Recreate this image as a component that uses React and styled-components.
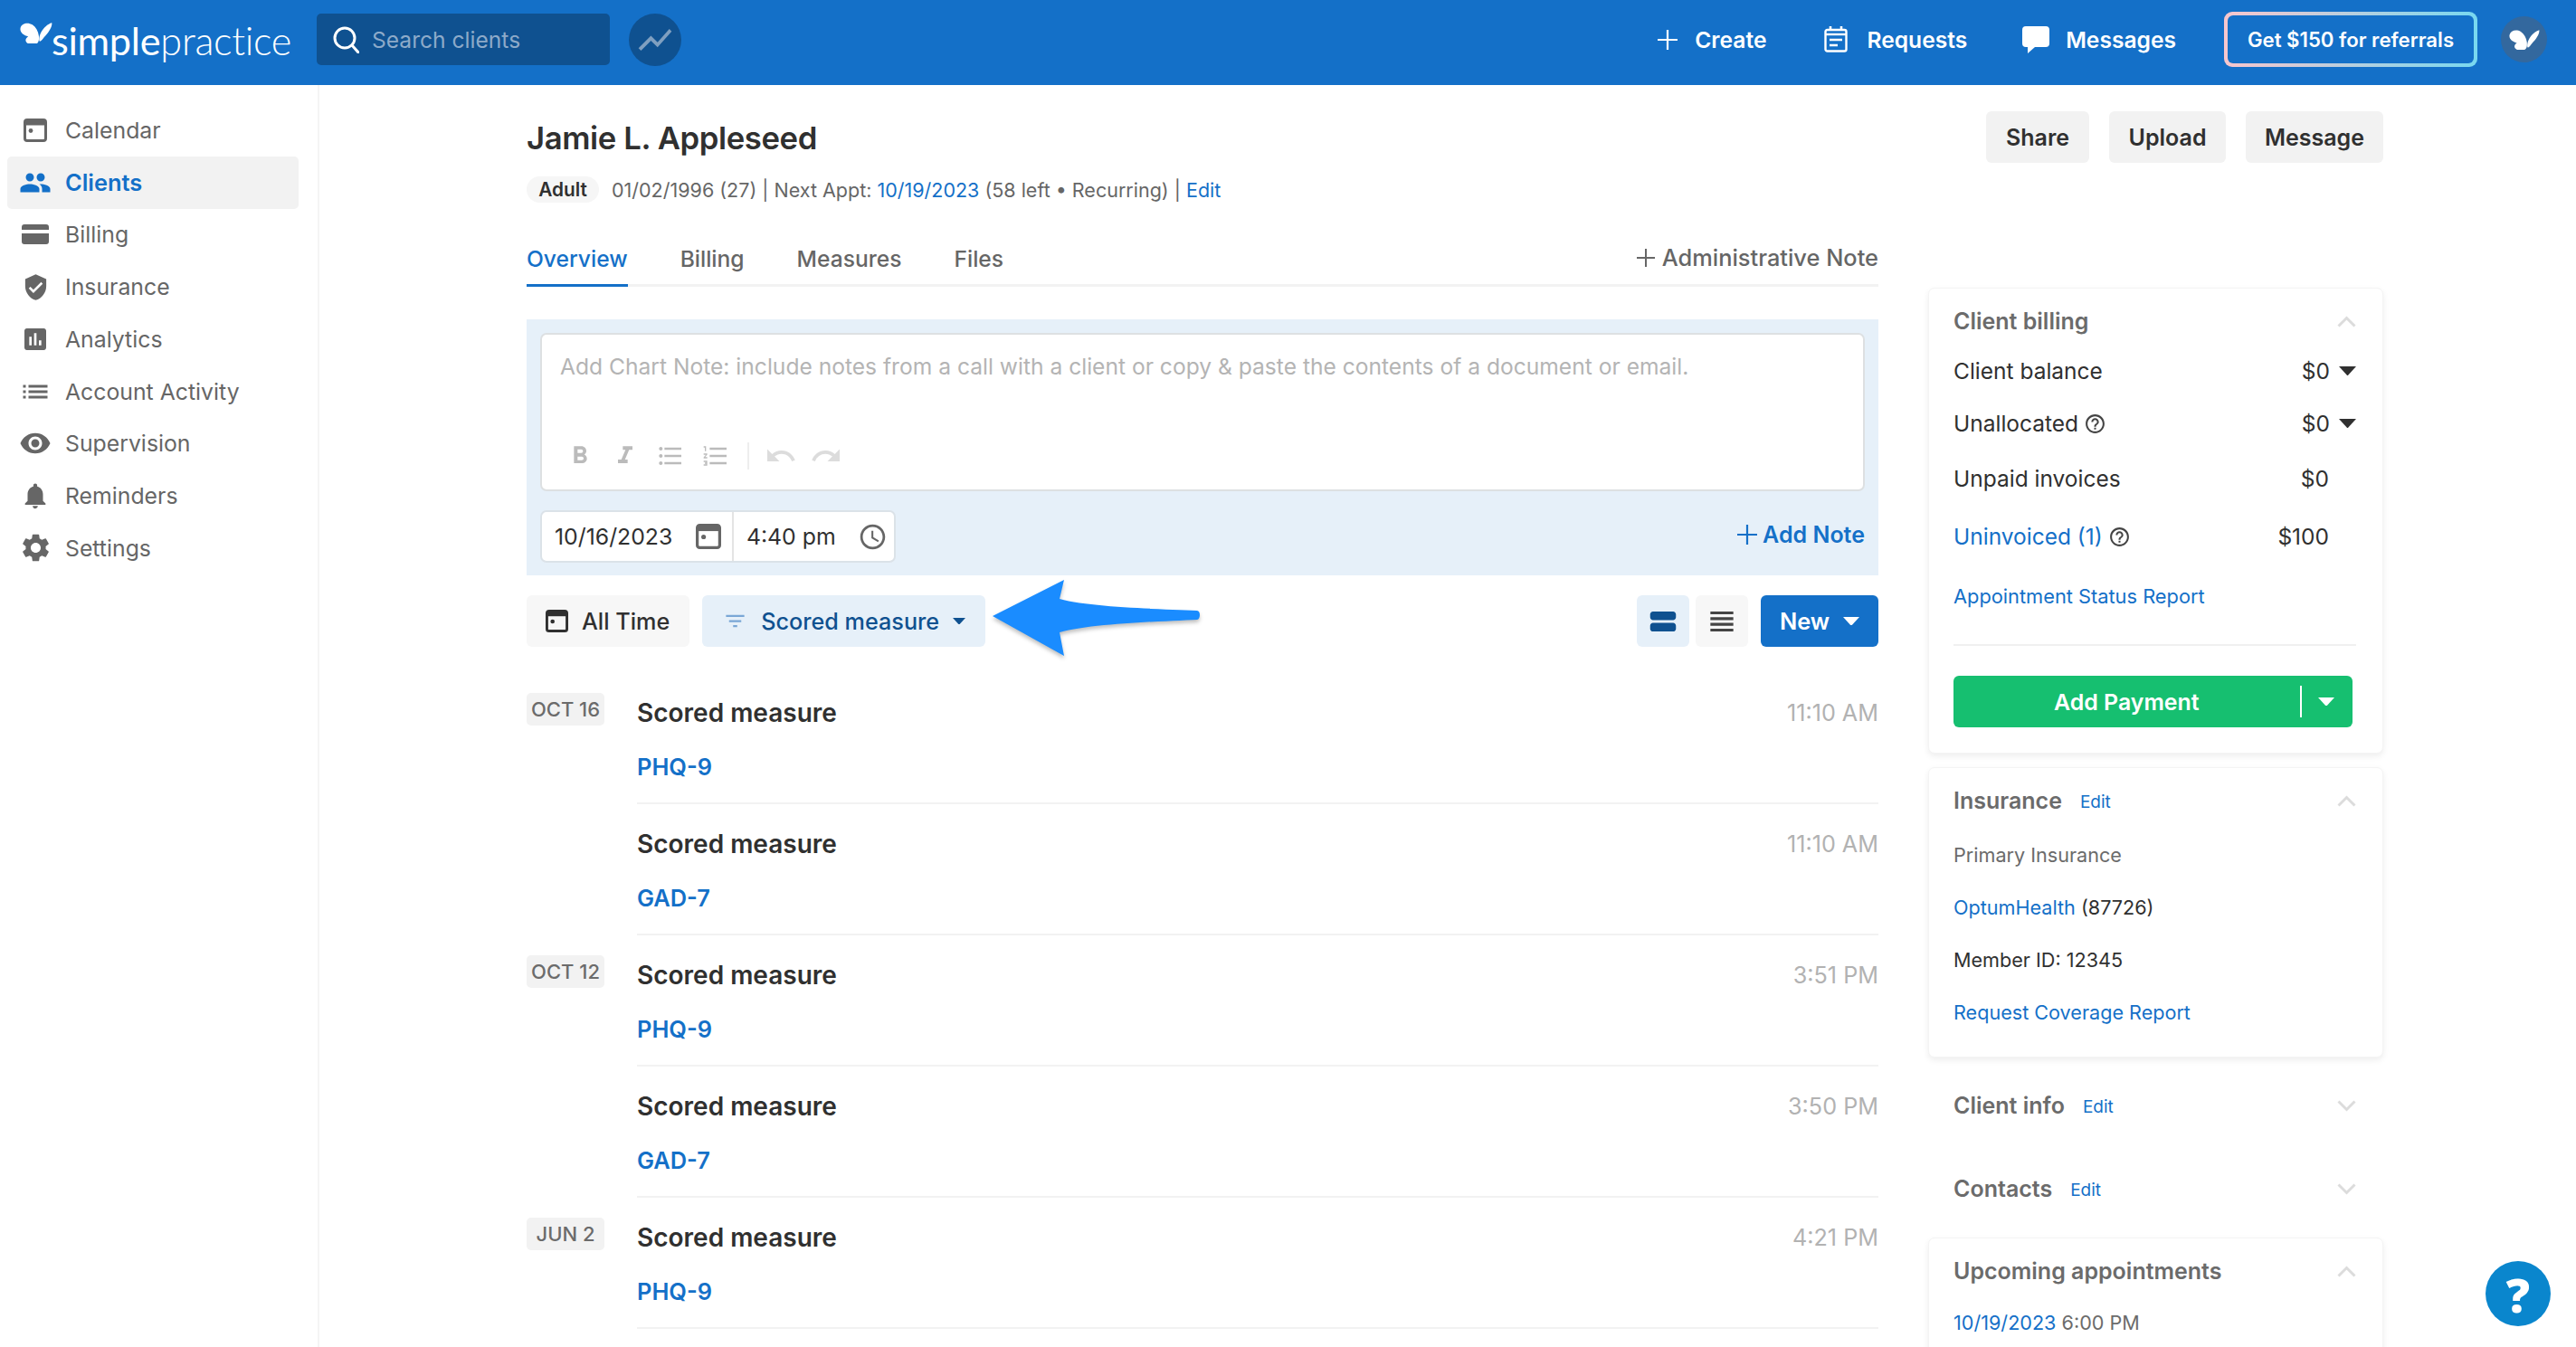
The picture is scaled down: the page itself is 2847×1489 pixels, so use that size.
import React from 'react';
import styled, { createGlobalStyle } from 'styled-components';
import {
  MdShowChart,
  MdVerifiedUser,
  MdAssessment,
  MdList,
  MdRemoveRedEye,
  MdNotifications,
  MdSettings,
  MdPeople,
  MdFormatBold,
  MdFormatItalic,
  MdFormatListBulleted,
  MdFormatListNumbered,
  MdUndo,
  MdRedo,
  MdAccessTime,
  MdFilterList,
  MdViewStream,
  MdViewHeadline,
  MdHelpOutline,
} from 'react-icons/md';

const BLUE = '#1470c8';
const NAVY = '#0f5190';

const GlobalStyle = createGlobalStyle`
  html, body {
    margin: 0;
    padding: 0;
    height: 100%;
    overflow: hidden;
    background: #fff;
  }
  body {
    font-family: Inter, "Liberation Sans", sans-serif;
    color: #303030;
  }
  * { box-sizing: border-box; }
`;

function Butterfly({ size = 36, color = '#fff' }) {
  return (
    <svg width={size} height={size * 0.69} viewBox="36 40 110 76" fill={color}>
      <path d="M38 60C42 46 62 40 78 50c12 8 20 22 22 38 1 12 0 22-7 26-13 4-33 4-37-8-2-6 2-12 8-16C48 86 34 76 38 60z" />
      <path d="M144 44c2 14-12 34-26 48-6 8-12 16-16 14-3-10 2-28 12-40 8-10 20-20 30-22z" />
    </svg>
  );
}

function SearchGlyph() {
  return (
    <svg width="29" height="30" viewBox="0 0 29 30" fill="none" stroke="#fff" strokeWidth="3">
      <circle cx="13" cy="13" r="11" />
      <path d="M21 21l7 8" strokeLinecap="round" />
    </svg>
  );
}

function CalendarIcon({ size = 26, color = '#666' }) {
  return (
    <svg width={size} height={size} viewBox="0 0 26 26" fill="none">
      <rect x="1.5" y="1.5" width="23" height="23" rx="2.5" stroke={color} strokeWidth="3" />
      <rect x="1.5" y="1.5" width="23" height="6" fill={color} />
      <circle cx="8" cy="13.5" r="2.4" fill={color} />
    </svg>
  );
}

function CardIcon({ color = '#666' }) {
  return (
    <svg width="30" height="22" viewBox="0 0 30 22">
      <path
        fill={color}
        d="M3 0h24a3 3 0 013 3v3H0V3a3 3 0 013-3zM0 10h30v9a3 3 0 01-3 3H3a3 3 0 01-3-3z"
      />
    </svg>
  );
}

function PlusIcon({ size = 22, color = '#fff', width = 2.2 }) {
  return (
    <svg width={size} height={size} viewBox="0 0 22 22" stroke={color} strokeWidth={width}>
      <path d="M11 0v22M0 11h22" />
    </svg>
  );
}

function RequestsIcon() {
  return (
    <svg width="26" height="29" viewBox="0 0 26 29" fill="none" stroke="#fff">
      <rect x="1.5" y="4" width="23" height="23.5" rx="2" strokeWidth="2.4" />
      <path d="M1.5 9h23" strokeWidth="2.4" />
      <path d="M7 0v5M19 0v5" strokeWidth="2.6" />
      <path d="M6 15h14M6 21h9" strokeWidth="2.6" />
    </svg>
  );
}

function MessageIcon() {
  return (
    <svg width="30" height="30" viewBox="0 0 30 30" fill="#fff">
      <path d="M4 0h22a4 4 0 014 4v15a4 4 0 01-4 4H14l-8 7V23H4a4 4 0 01-4-4V4a4 4 0 014-4z" />
    </svg>
  );
}

function Caret({ size = 14, color = '#303030' }) {
  return (
    <svg width={size} height={size * 0.55} viewBox="0 0 20 11" fill={color}>
      <path d="M0 0h20L10 11z" />
    </svg>
  );
}

function Chevron({ up }) {
  return (
    <svg width="21" height="13" viewBox="0 0 21 13" fill="none" stroke="#dcdcdc" strokeWidth="3">
      <path d={up ? 'M1.5 11.5l9-9 9 9' : 'M1.5 1.5l9 9 9-9'} />
    </svg>
  );
}

function HelpDot() {
  return <MdHelpOutline size={25} color="#444" />;
}

const Page = styled.div`
  display: flex;
  flex-direction: column;
  height: 100vh;
  overflow: hidden;
`;

const TopBar = styled.header`
  flex: none;
  height: 94px;
  background: ${BLUE};
  display: flex;
  align-items: center;
  padding: 0 32px 7px 22px;
`;

const Logo = styled.div`
  display: flex;
  align-items: flex-start;
  width: 328px;
  color: #fff;
  font-family: Lato, sans-serif;
  font-size: 43.3px;
  line-height: 48px;
  letter-spacing: -0.3px;
  svg {
    margin-top: 4px;
    margin-right: -1px;
    flex: none;
  }
  b {
    font-weight: 400;
  }
  span {
    font-weight: 300;
  }
`;

const SearchBox = styled.div`
  width: 324px;
  height: 57px;
  background: ${NAVY};
  border-radius: 5px;
  display: flex;
  align-items: center;
  gap: 14px;
  padding-left: 18px;
  color: #8daac9;
  font-size: 24.6px;
`;

const TrendButton = styled.div`
  width: 58px;
  height: 58px;
  margin-left: 21px;
  border-radius: 50%;
  background: ${NAVY};
  display: flex;
  align-items: center;
  justify-content: center;
`;

const TopActions = styled.nav`
  margin-left: auto;
  display: flex;
  align-items: center;
`;

const TopLink = styled.div`
  display: flex;
  align-items: center;
  gap: ${(p) => p.$gap}px;
  margin-right: ${(p) => p.$right}px;
  color: #fff;
  font-size: 24.6px;
  font-weight: 600;
`;

const ReferralBorder = styled.div`
  width: 280px;
  height: 61px;
  padding: 4px;
  border-radius: 9px;
  background: linear-gradient(90deg, #f8c6cd, #78d8f0);
`;

const ReferralButton = styled.div`
  height: 100%;
  border-radius: 6px;
  background: ${BLUE};
  display: flex;
  align-items: center;
  justify-content: center;
  color: #fff;
  font-size: 22.2px;
  font-weight: 600;
`;

const Avatar = styled.div`
  width: 51px;
  height: 51px;
  margin-left: 26px;
  border-radius: 50%;
  background: #33689e;
  display: flex;
  align-items: center;
  justify-content: center;
`;

const Body = styled.div`
  flex: 1;
  display: flex;
  min-height: 0;
`;

const Sidebar = styled.aside`
  flex: none;
  width: 353px;
  border-right: 2px solid #f4f4f4;
  padding: 21px 21px 0 8px;
`;

const NavItem = styled.div`
  height: 58px;
  margin-bottom: -0.3px;
  border-radius: 5px;
  display: flex;
  align-items: center;
  background: ${(p) => (p.$active ? '#f2f2f2' : 'transparent')};
  color: ${(p) => (p.$active ? BLUE : '#666')};
  font-size: ${(p) => (p.$active ? 25.4 : 24.8)}px;
  font-weight: ${(p) => (p.$active ? 600 : 400)};
`;

const NavIcon = styled.span`
  width: 64px;
  flex: none;
  display: flex;
  justify-content: center;
  padding-right: 2px;
`;

const Main = styled.main`
  flex: 1;
  display: grid;
  grid-template-columns: 1494px 503px;
  column-gap: 55px;
  align-content: start;
  padding: 29px 0 0 229px;
`;

const LeftColumn = styled.div`
  min-width: 0;
`;

const ClientName = styled.h1`
  margin: 7px 0 0;
  font-size: 34.7px;
  line-height: 44px;
  font-weight: 600;
  letter-spacing: -0.4px;
`;

const MetaRow = styled.div`
  margin-top: 21px;
  height: 29px;
  display: flex;
  align-items: center;
  color: #666;
  font-size: 21.5px;
`;

const AgeBadge = styled.span`
  width: 80px;
  height: 29px;
  margin-right: 14px;
  border-radius: 15px;
  background: #f6f6f6;
  color: #303030;
  font-size: 20.8px;
  font-weight: 600;
  display: flex;
  align-items: center;
  justify-content: center;
`;

const Link = styled.a`
  color: ${BLUE};
`;

const Tabs = styled.div`
  margin-top: 30px;
  height: 63px;
  display: flex;
  gap: 58px;
  border-bottom: 3px solid #f2f2f2;
`;

const Tab = styled.div`
  height: 63px;
  display: flex;
  align-items: center;
  padding-top: 3px;
  font-size: 24.6px;
  font-weight: 500;
  color: ${(p) => (p.$active ? BLUE : '#666')};
  border-bottom: 3px solid ${(p) => (p.$active ? BLUE : 'transparent')};
`;

const AdminNote = styled.div`
  margin-left: auto;
  display: flex;
  align-items: center;
  gap: 8px;
  padding-top: 1px;
  color: #666;
  font-size: 25.4px;
  font-weight: 500;
`;

const NotePanel = styled.section`
  margin-top: 36px;
  height: 283px;
  padding: 15px;
  background: #e6f0f9;
`;

const Editor = styled.div`
  height: 175px;
  padding: 18px 20px 0;
  background: #fff;
  border: 2px solid #dde0e2;
  border-radius: 7px;
  color: #b4b4b4;
  font-size: 24.6px;
  line-height: 34px;
`;

const Toolbar = styled.div`
  display: flex;
  align-items: center;
  margin-top: 59px;
  margin-left: -3px;
  height: 46px;
`;

const ToolIcon = styled.span`
  width: 50px;
  display: flex;
  justify-content: center;
  color: ${(p) => (p.$muted ? '#dcdcdc' : '#bbb')};
`;

const ToolDivider = styled.span`
  width: 2px;
  height: 30px;
  margin: 0 10px;
  background: #eee;
`;

const NoteFooter = styled.div`
  margin-top: 21px;
  display: flex;
  align-items: center;
  justify-content: space-between;
`;

const DateTime = styled.div`
  height: 58px;
  width: 393px;
  display: flex;
  background: #fff;
  border: 2px solid #dbe2e8;
  border-radius: 7px;
  font-size: 24.8px;
`;

const DateField = styled.div`
  display: flex;
  align-items: center;
  justify-content: space-between;
  width: ${(p) => p.$width}px;
  padding: 0 ${(p) => p.$padRight}px 0 14px;
  border-right: ${(p) => (p.$divided ? '2px solid #e4e4e4' : 'none')};
`;

const AddNote = styled.div`
  display: flex;
  align-items: center;
  gap: 6px;
  margin-top: -4px;
  color: ${BLUE};
  font-size: 25px;
  font-weight: 600;
`;

const FilterRow = styled.div`
  margin-top: 22px;
  display: flex;
  align-items: center;
`;

const FilterButton = styled.div`
  position: relative;
  height: 57px;
  margin-right: ${(p) => p.$right || 0}px;
  padding: 0 ${(p) => p.$padRight}px 0 ${(p) => p.$padLeft}px;
  border-radius: 6px;
  display: flex;
  align-items: center;
  gap: ${(p) => p.$gap || 15}px;
  background: ${(p) => (p.$selected ? '#e6f0f9' : '#f7f7f7')};
  color: ${(p) => (p.$selected ? NAVY : '#303030')};
  font-size: 25.2px;
  font-weight: 500;
`;

const ViewButton = styled(FilterButton)`
  width: 58px;
  padding: 0;
  justify-content: center;
`;

const NewButton = styled.div`
  width: 130px;
  height: 57px;
  margin-left: 14px;
  border-radius: 6px;
  background: ${BLUE};
  color: #fff;
  font-size: 25.4px;
  font-weight: 600;
  display: flex;
  align-items: center;
  justify-content: center;
  gap: 15px;
`;

const Annotation = styled.svg`
  position: absolute;
  left: 321px;
  top: -19px;
  pointer-events: none;
  filter: drop-shadow(0 3px 2px rgba(0, 0, 0, 0.25));
`;

const Spacer = styled.div`
  flex: 1;
`;

const List = styled.div`
  margin-top: 29px;
`;

const Entry = styled.div`
  display: grid;
  grid-template-columns: 122px 1fr;
  height: 145px;
`;

const DateTag = styled.div`
  justify-self: start;
  align-self: start;
  width: 86px;
  height: 36px;
  margin-top: 22px;
  border-radius: 5px;
  background: #f2f2f2;
  color: #6b6b6b;
  font-size: 22px;
  font-weight: 500;
  display: flex;
  align-items: center;
  justify-content: center;
`;

const EntryBody = styled.div`
  border-bottom: 2px solid #f2f2f2;
  padding-top: 27px;
`;

const EntryTop = styled.div`
  display: flex;
  justify-content: space-between;
  align-items: center;
  height: 34px;
  font-size: 28px;
  font-weight: 600;
`;

const EntryTime = styled.span`
  color: #b2b2b2;
  font-size: 25.2px;
  font-weight: 400;
`;

const EntryLink = styled.div`
  margin-top: 26px;
  color: ${BLUE};
  font-size: 25.4px;
  line-height: 34px;
  font-weight: 600;
`;

const RightColumn = styled.div`
  min-width: 0;
`;

const Actions = styled.div`
  display: flex;
  justify-content: flex-end;
  gap: 22px;
  margin-bottom: 138px;
`;

const GreyButton = styled.div`
  width: ${(p) => p.$width}px;
  height: 57px;
  border-radius: 6px;
  background: #f2f2f2;
  display: flex;
  align-items: center;
  justify-content: center;
  font-size: 25px;
  font-weight: 600;
`;

const Card = styled.section`
  height: ${(p) => p.$height}px;
  margin-top: ${(p) => p.$top || 0}px;
  margin-bottom: 15px;
  padding: 19px 29px 0 27px;
  border-radius: 7px;
  background: #fff;
  border: 1px solid #f4f4f4;
  box-shadow: 0 3px 7px rgba(0, 0, 0, 0.07);
`;

const Collapsed = styled.section`
  padding: 0 30px 0 28px;
  margin-top: ${(p) => p.$top}px;
`;

const SectionHead = styled.div`
  height: 34px;
  display: flex;
  align-items: center;
  color: #6b6b6b;
  font-size: 25px;
  font-weight: 600;
  svg {
    margin-left: auto;
  }
`;

const EditLink = styled.span`
  margin-left: 20px;
  margin-top: 3px;
  color: ${BLUE};
  font-size: 19px;
  font-weight: 400;
`;

const BalanceRow = styled.div`
  height: 34px;
  margin-top: ${(p) => p.$top}px;
  display: flex;
  align-items: center;
  font-size: 24.5px;
  color: #303030;
`;

const BalanceLabel = styled.span`
  display: flex;
  align-items: center;
  gap: 6px;
  color: ${(p) => (p.$link ? BLUE : 'inherit')};
`;

const Amount = styled.span`
  margin-left: auto;
  margin-right: ${(p) => (p.$caret ? 0 : 30)}px;
  display: flex;
  align-items: center;
  gap: 10px;
`;

const SmallLink = styled.div`
  margin-top: ${(p) => p.$top}px;
  color: ${BLUE};
  font-size: 21.8px;
  line-height: 34px;
`;

const Rule = styled.div`
  margin-top: 36px;
  height: 2px;
  background: #f0f0f0;
`;

const PaymentButton = styled.div`
  width: 441px;
  height: 57px;
  margin-top: 33px;
  border-radius: 6px;
  background: #16bf70;
  color: #fff;
  font-size: 24.9px;
  font-weight: 600;
  display: flex;
  align-items: center;
  padding-left: 111px;
`;

const PaymentSplit = styled.span`
  margin-left: auto;
  width: 58px;
  height: 35px;
  border-left: 2px solid #fff;
  display: flex;
  align-items: center;
  justify-content: center;
  padding-right: 2px;
`;

const InfoLine = styled.div`
  margin-top: ${(p) => p.$top || 24}px;
  font-size: 21.6px;
  line-height: 34px;
  color: ${(p) => (p.$muted ? '#6b6b6b' : '#303030')};
`;

const HelpBubble = styled.div`
  position: fixed;
  left: 2747px;
  top: 1394px;
  width: 72px;
  height: 72px;
  border-radius: 50%;
  background: #0a86cd;
  color: #fff;
  font-family: "Open Sans", sans-serif;
  font-size: 52px;
  font-weight: 800;
  display: flex;
  align-items: center;
  justify-content: center;
`;

const navItems = [
  { label: 'Calendar', icon: <CalendarIcon /> },
  { label: 'Clients', icon: <MdPeople size={36} />, active: true },
  { label: 'Billing', icon: <CardIcon /> },
  { label: 'Insurance', icon: <MdVerifiedUser size={31} /> },
  { label: 'Analytics', icon: <MdAssessment size={32} /> },
  { label: 'Account Activity', icon: <MdList size={36} /> },
  { label: 'Supervision', icon: <MdRemoveRedEye size={36} /> },
  { label: 'Reminders', icon: <MdNotifications size={34} /> },
  { label: 'Settings', icon: <MdSettings size={37} /> },
];

const entries = [
  { date: 'OCT 16', time: '11:10 AM', name: 'PHQ-9' },
  { time: '11:10 AM', name: 'GAD-7' },
  { date: 'OCT 12', time: '3:51 PM', name: 'PHQ-9' },
  { time: '3:50 PM', name: 'GAD-7' },
  { date: 'JUN 2', time: '4:21 PM', name: 'PHQ-9' },
];

export default function App() {
  return (
    <Page>
      <GlobalStyle />
      <TopBar>
        <Logo>
          <Butterfly />
          <b>simple</b>
          <span>practice</span>
        </Logo>
        <SearchBox>
          <SearchGlyph />
          Search clients
        </SearchBox>
        <TrendButton>
          <MdShowChart size={44} color="#7f9fc0" />
        </TrendButton>
        <TopActions>
          <TopLink $gap={19} $right={64}>
            <PlusIcon />
            Create
          </TopLink>
          <TopLink $gap={21} $right={61}>
            <RequestsIcon />
            Requests
          </TopLink>
          <TopLink $gap={18} $right={53}>
            <MessageIcon />
            Messages
          </TopLink>
          <ReferralBorder>
            <ReferralButton>Get $150 for referrals</ReferralButton>
          </ReferralBorder>
          <Avatar>
            <Butterfly size={34} />
          </Avatar>
        </TopActions>
      </TopBar>
      <Body>
        <Sidebar>
          {navItems.map((item) => (
            <NavItem key={item.label} $active={item.active}>
              <NavIcon>{item.icon}</NavIcon>
              {item.label}
            </NavItem>
          ))}
        </Sidebar>
        <Main>
          <LeftColumn>
            <ClientName>Jamie L. Appleseed</ClientName>
            <MetaRow>
              <AgeBadge>Adult</AgeBadge>
              01/02/1996 (27) | Next Appt:&nbsp;<Link>10/19/2023</Link>&nbsp;(58 left • Recurring) |&nbsp;
              <Link>Edit</Link>
            </MetaRow>
            <Tabs>
              <Tab $active>Overview</Tab>
              <Tab>Billing</Tab>
              <Tab>Measures</Tab>
              <Tab>Files</Tab>
              <AdminNote>
                <PlusIcon color="#666" size={20} />
                Administrative Note
              </AdminNote>
            </Tabs>
            <NotePanel>
              <Editor>
                Add Chart Note: include notes from a call with a client or copy &amp; paste the contents of a document or email.
                <Toolbar>
                  <ToolIcon><MdFormatBold size={32} /></ToolIcon>
                  <ToolIcon><MdFormatItalic size={32} /></ToolIcon>
                  <ToolIcon><MdFormatListBulleted size={32} /></ToolIcon>
                  <ToolIcon><MdFormatListNumbered size={32} /></ToolIcon>
                  <ToolDivider />
                  <ToolIcon $muted><MdUndo size={36} /></ToolIcon>
                  <ToolIcon $muted><MdRedo size={36} /></ToolIcon>
                </Toolbar>
              </Editor>
              <NoteFooter>
                <DateTime>
                  <DateField $width={213} $padRight={12} $divided>
                    10/16/2023
                    <CalendarIcon size={28} />
                  </DateField>
                  <DateField $width={178} $padRight={7}>
                    4:40 pm
                    <MdAccessTime size={33} color="#666" />
                  </DateField>
                </DateTime>
                <AddNote>
                  <PlusIcon color={BLUE} />
                  Add Note
                </AddNote>
              </NoteFooter>
            </NotePanel>
            <FilterRow>
              <FilterButton $right={14} $padLeft={21} $padRight={22}>
                <CalendarIcon size={25} color="#303030" />
                All Time
              </FilterButton>
              <FilterButton $selected $padLeft={23} $padRight={22}>
                <MdFilterList size={27} color="#7aa7d6" />
                Scored measure
                <Caret color={NAVY} />
                <Annotation width="240" height="92" viewBox="0 0 240 92">
                  <path
                    fill="#1a8cff"
                    d="M0 42 79 2 74 23C110 33 190 34 226 36c4 0 4 9 0 10-36 2-116 4-152 14l5 26z"
                  />
                </Annotation>
              </FilterButton>
              <Spacer />
              <ViewButton $selected $padLeft={0} $padRight={0} $right={7}>
                <MdViewStream size={38} color={NAVY} />
              </ViewButton>
              <ViewButton $padLeft={0} $padRight={0}>
                <MdViewHeadline size={38} color="#444" />
              </ViewButton>
              <NewButton>
                New
                <Caret size={18} color="#fff" />
              </NewButton>
            </FilterRow>
            <List>
              {entries.map((entry, i) => (
                <Entry key={i}>
                  <div>{entry.date && <DateTag>{entry.date}</DateTag>}</div>
                  <EntryBody>
                    <EntryTop>
                      Scored measure
                      <EntryTime>{entry.time}</EntryTime>
                    </EntryTop>
                    <EntryLink>{entry.name}</EntryLink>
                  </EntryBody>
                </Entry>
              ))}
            </List>
          </LeftColumn>
          <RightColumn>
            <Actions>
              <GreyButton $width={114}>Share</GreyButton>
              <GreyButton $width={129}>Upload</GreyButton>
              <GreyButton $width={152}>Message</GreyButton>
            </Actions>
            <Card $height={515}>
              <SectionHead>
                Client billing
                <Chevron up />
              </SectionHead>
              <BalanceRow $top={21}>
                Client balance
                <Amount $caret>
                  $0
                  <Caret size={19} />
                </Amount>
              </BalanceRow>
              <BalanceRow $top={24}>
                <BalanceLabel>
                  Unallocated
                  <HelpDot />
                </BalanceLabel>
                <Amount $caret>
                  $0
                  <Caret size={19} />
                </Amount>
              </BalanceRow>
              <BalanceRow $top={27}>
                Unpaid invoices
                <Amount>$0</Amount>
              </BalanceRow>
              <BalanceRow $top={30}>
                <BalanceLabel $link>
                  Uninvoiced (1)
                  <HelpDot />
                </BalanceLabel>
                <Amount>$100</Amount>
              </BalanceRow>
              <SmallLink $top={32}>Appointment Status Report</SmallLink>
              <Rule />
              <PaymentButton>
                Add Payment
                <PaymentSplit>
                  <Caret size={18} color="#fff" />
                </PaymentSplit>
              </PaymentButton>
            </Card>
            <Card $height={321}>
              <SectionHead>
                Insurance
                <EditLink>Edit</EditLink>
                <Chevron up />
              </SectionHead>
              <InfoLine $muted $top={26}>Primary Insurance</InfoLine>
              <InfoLine>
                <Link>OptumHealth</Link> (87726)
              </InfoLine>
              <InfoLine>Member ID: 12345</InfoLine>
              <InfoLine>
                <Link>Request Coverage Report</Link>
              </InfoLine>
            </Card>
            <Collapsed $top={36}>
              <SectionHead>
                Client info
                <EditLink>Edit</EditLink>
                <Chevron />
              </SectionHead>
            </Collapsed>
            <Collapsed $top={58}>
              <SectionHead>
                Contacts
                <EditLink>Edit</EditLink>
                <Chevron />
              </SectionHead>
            </Collapsed>
            <Card $height={300} $top={37}>
              <SectionHead>
                Upcoming appointments
                <Chevron up />
              </SectionHead>
              <InfoLine $muted $top={23}>
                <Link>10/19/2023</Link> 6:00 PM
              </InfoLine>
            </Card>
          </RightColumn>
        </Main>
      </Body>
      <HelpBubble>?</HelpBubble>
    </Page>
  );
}
